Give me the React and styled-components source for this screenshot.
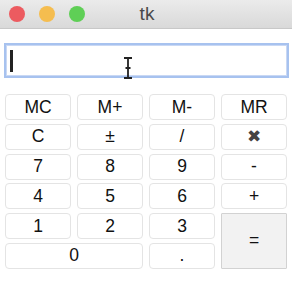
import React from 'react'
import styled, { createGlobalStyle } from 'styled-components'

const Global = createGlobalStyle`
  html, body {
    margin: 0;
    padding: 0;
    background: #ffffff;
    font-family: "Liberation Sans", Arial, sans-serif;
  }
`

const Window = styled.div`
  width: 292px;
  height: 283px;
  background: #ffffff;
  overflow: hidden;
`

const TitleBar = styled.div`
  position: relative;
  height: 28px;
  background: linear-gradient(#ebebeb, #d9d9d9);
  border-bottom: 1px solid #c8c8c8;
  display: flex;
  align-items: center;
  justify-content: center;
`

const Lights = styled.div`
  position: absolute;
  left: 9px;
  top: 6px;
  display: flex;
  gap: 14px;
`

const Light = styled.span`
  width: 16px;
  height: 16px;
  border-radius: 50%;
  background: ${p => p.color};
`

const Title = styled.span`
  font-family: "Liberation Sans", Arial, sans-serif;
  font-size: 19px;
  color: #4a4a4a;
  margin-left: 2px;
`

const Body = styled.div`
  padding: 14px 3px 0 4px;
`

const Entry = styled.div`
  position: relative;
  box-sizing: border-box;
  width: 285px;
  height: 35px;
  border: 2px solid #a7c2ef;
  box-shadow: inset 0 0 0 1px #c9d8f4;
  background: #ffffff;
`

const Caret = styled.span`
  position: absolute;
  left: 4px;
  top: 5px;
  width: 2.5px;
  height: 22px;
  background: #222;
`

const IBeam = styled.svg`
  position: absolute;
  left: 116px;
  top: 12px;
`

const Pad = styled.div`
  display: grid;
  grid-template-columns: repeat(4, 66px);
  grid-auto-rows: 26px;
  column-gap: 6px;
  row-gap: 3.8px;
  margin-top: 16px;
  padding-left: 1px;
`

const Key = styled.div`
  box-sizing: border-box;
  display: flex;
  align-items: center;
  justify-content: center;
  border: 1px solid;
  background: ${p => (p.$pressed ? '#f2f2f2' : '#ffffff')};
  border-color: ${p => (p.$pressed ? '#d2d2d2' : '#e4e4e4')};
  border-radius: ${p => (p.$pressed ? '1px' : '4px')};
  grid-column: ${p => (p.$wide ? 'span 2' : 'auto')};
  grid-row: ${p => (p.$tall ? 'span 2' : 'auto')};
  font-size: 17.5px;
  color: #111;
  padding-bottom: ${p => (p.$tall ? '2px' : '0')};
`

const Times = styled.span`
  font-size: 17px;
  color: #444;
`

const keys = [
  ['MC'], ['M+'], ['M-'], ['MR'],
  ['C'], ['±'], ['/'], ['times'],
  ['7'], ['8'], ['9'], ['-'],
  ['4'], ['5'], ['6'], ['+'],
  ['1'], ['2'], ['3'], ['=', 'tall'],
  ['0', 'wide'], ['.'],
]

export default function App() {
  return (
    <Window>
      <Global />
      <TitleBar>
        <Lights>
          <Light color="#ec5b60" />
          <Light color="#f5bd4f" />
          <Light color="#5fcf56" />
        </Lights>
        <Title>tk</Title>
      </TitleBar>
      <Body>
        <Entry>
          <Caret />
          <IBeam width="12" height="22" viewBox="0 0 12 22">
            <path d="M2 1 H10 M6 1 V21 M2 21 H10 M3.5 11 H8.5" stroke="#222" strokeWidth="1.8" fill="none" />
          </IBeam>
        </Entry>
        <Pad>
          {keys.map(([label, kind], i) => (
            <Key key={i} $wide={kind === 'wide'} $tall={kind === 'tall'} $pressed={kind === 'tall'}>
              {label === 'times' ? <Times>✖</Times> : label}
            </Key>
          ))}
        </Pad>
      </Body>
    </Window>
  )
}
